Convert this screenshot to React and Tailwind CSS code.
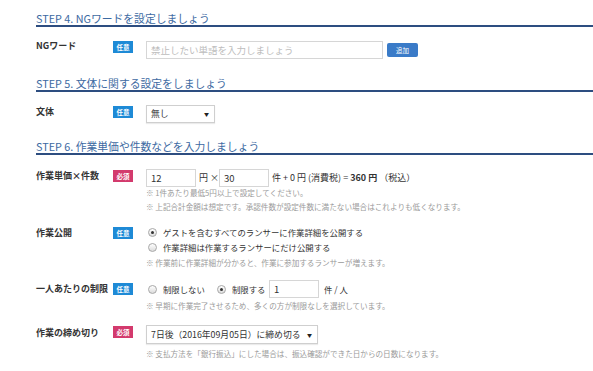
import React from 'react';

const Badge = ({ required, className = '' }) => (
    <span
        className={`flex h-[12px] w-[20px] shrink-0 items-center justify-center text-[6.5px] font-bold leading-none text-white ${required ? 'bg-[#d33a6d]' : 'bg-[#1e8ad6]'} ${className}`}>
        {required ? '必須' : '任意'}
    </span>
);

const Heading = ({ children, className = '' }) => (
    <h2 className={`border-b-2 border-[#2d4d80] pb-[1px] text-[10.8px] leading-[12px] text-[#3d6aa2] ${className}`}>
        {children}
    </h2>
);

const Radio = ({ checked }) => (
    <span className="flex h-[9px] w-[9px] shrink-0 items-center justify-center rounded-full border border-[#a8a8a8] bg-gradient-to-b from-white to-[#dcdcdc]">
        {checked ? <span className="h-[3px] w-[3px] rounded-full bg-[#333]" /> : null}
    </span>
);

const Note = ({ children, className = '' }) => (
    <p className={`whitespace-nowrap text-[7.6px] leading-[14px] text-[#9a9a9a] ${className}`}>※ {children}</p>
);

const Box = ({ children, className = '' }) => (
    <div className={`flex h-[18px] shrink-0 items-center border border-[#d6d6d6] bg-white pl-[4px] text-[9.5px] text-[#333] ${className}`}>
        {children}
    </div>
);

const Select = ({ children, className = '' }) => (
    <div className={`flex items-center justify-between border border-[#cfcfcf] bg-white pl-[4px] pr-[5px] text-[8.8px] text-[#333] shadow-[0_1px_1px_rgba(0,0,0,0.08)] ${className}`}>
        <span className="whitespace-nowrap">{children}</span>
        <span className="ml-[4px] text-[5px] text-[#222]">▼</span>
    </div>
);

export default function App() {
    return (
        <div className="h-[371px] w-[593px] overflow-hidden bg-white pl-[36px] pt-[12px] font-['Noto_Sans_CJK_JP',sans-serif] text-[#333]">
            {/* step 4 */}
            <Heading>STEP 4. NGワードを設定しましょう</Heading>
            <div className="mt-[14px] flex items-start">
                <div className="w-[77px] text-[9px] font-bold leading-[10px]">NGワード</div>
                <Badge />
                <Box className="ml-[13px] w-[237px] text-[8.4px] text-[#bdbdbd]">禁止したい単語を入力しましょう</Box>
                <button className="ml-[4px] mt-[2px] flex h-[14px] w-[31px] items-center justify-center rounded-[2px] bg-[#3a7bc8] text-[6.5px] leading-none text-white">追加</button>
            </div>

            {/* step 5 */}
            <Heading className="mt-[18px]">STEP 5. 文体に関する設定をしましょう</Heading>
            <div className="mt-[13px] flex items-start">
                <div className="mt-[1px] w-[77px] text-[9px] font-bold leading-[12px]">文体</div>
                <Badge className="mt-[1px]" />
                <Select className="ml-[13px] h-[18px] w-[69px]">無し</Select>
            </div>

            {/* step 6 */}
            <Heading className="mt-[17px]">STEP 6. 作業単価や件数などを入力しましょう</Heading>
            <div className="mt-[14px] flex items-start">
                <div className="mt-[1px] w-[77px] text-[9px] font-bold leading-[12px]">作業単価×件数</div>
                <Badge required className="mt-[1px]" />
                <div className="ml-[13px]">
                    <div className="flex items-center whitespace-nowrap text-[9px]">
                        <Box className="w-[50px]">12</Box>
                        <span className="ml-[3px] w-[20px] shrink-0">円 ×</span>
                        <Box className="w-[50px]">30</Box>
                        <span className="ml-[3px]">件 + 0 円 (消費税) = <b>360 円</b> （税込）</span>
                    </div>
                    <Note className="-mt-[1px]">1件あたり最低5円以上で設定してください。</Note>
                    <Note>上記合計金額は想定です。承認件数が設定件数に満たない場合はこれよりも低くなります。</Note>
                </div>
            </div>

            <div className="mt-[11px] flex items-start">
                <div className="w-[77px] text-[9px] font-bold leading-[15px]">作業公開</div>
                <Badge className="mt-[2px]" />
                <div className="ml-[13px]">
                    <div className="flex items-center gap-[6px] pl-[2px] text-[8.4px] leading-[15px]">
                        <Radio checked />
                        <span>ゲストを含むすべてのランサーに作業詳細を公開する</span>
                    </div>
                    <div className="flex items-center gap-[6px] pl-[2px] text-[8.4px] leading-[15px]">
                        <Radio />
                        <span>作業詳細は作業するランサーにだけ公開する</span>
                    </div>
                    <Note className="leading-[15px]">作業前に作業詳細が分かると、作業に参加するランサーが増えます。</Note>
                </div>
            </div>

            <div className="mt-[10px] flex items-start">
                <div className="w-[77px] text-[9px] font-bold leading-[18px]">一人あたりの制限</div>
                <Badge className="mt-[3px]" />
                <div className="ml-[13px]">
                    <div className="flex h-[18px] items-center pl-[2px] text-[8.4px]">
                        <Radio />
                        <span className="ml-[6px] w-[54px]">制限しない</span>
                        <Radio checked />
                        <span className="ml-[6px] w-[37px]">制限する</span>
                        <Box className="w-[50px]">1</Box>
                        <span className="ml-[5px]">件 / 人</span>
                    </div>
                    <Note className="mt-[1px]">早期に作業完了させるため、多くの方が制限なしを選択しています。</Note>
                </div>
            </div>

            <div className="mt-[12px] flex items-start">
                <div className="mt-[1px] w-[77px] text-[9px] font-bold leading-[14px]">作業の締め切り</div>
                <Badge required className="mt-[1px]" />
                <div className="ml-[13px]">
                    <Select className="h-[19px] w-[172px]">7日後（2016年09月05日）に締め切る</Select>
                    <Note className="mt-[3px]">支払方法を「銀行振込」にした場合は、振込確認ができた日からの日数になります。</Note>
                </div>
            </div>
        </div>
    );
}
